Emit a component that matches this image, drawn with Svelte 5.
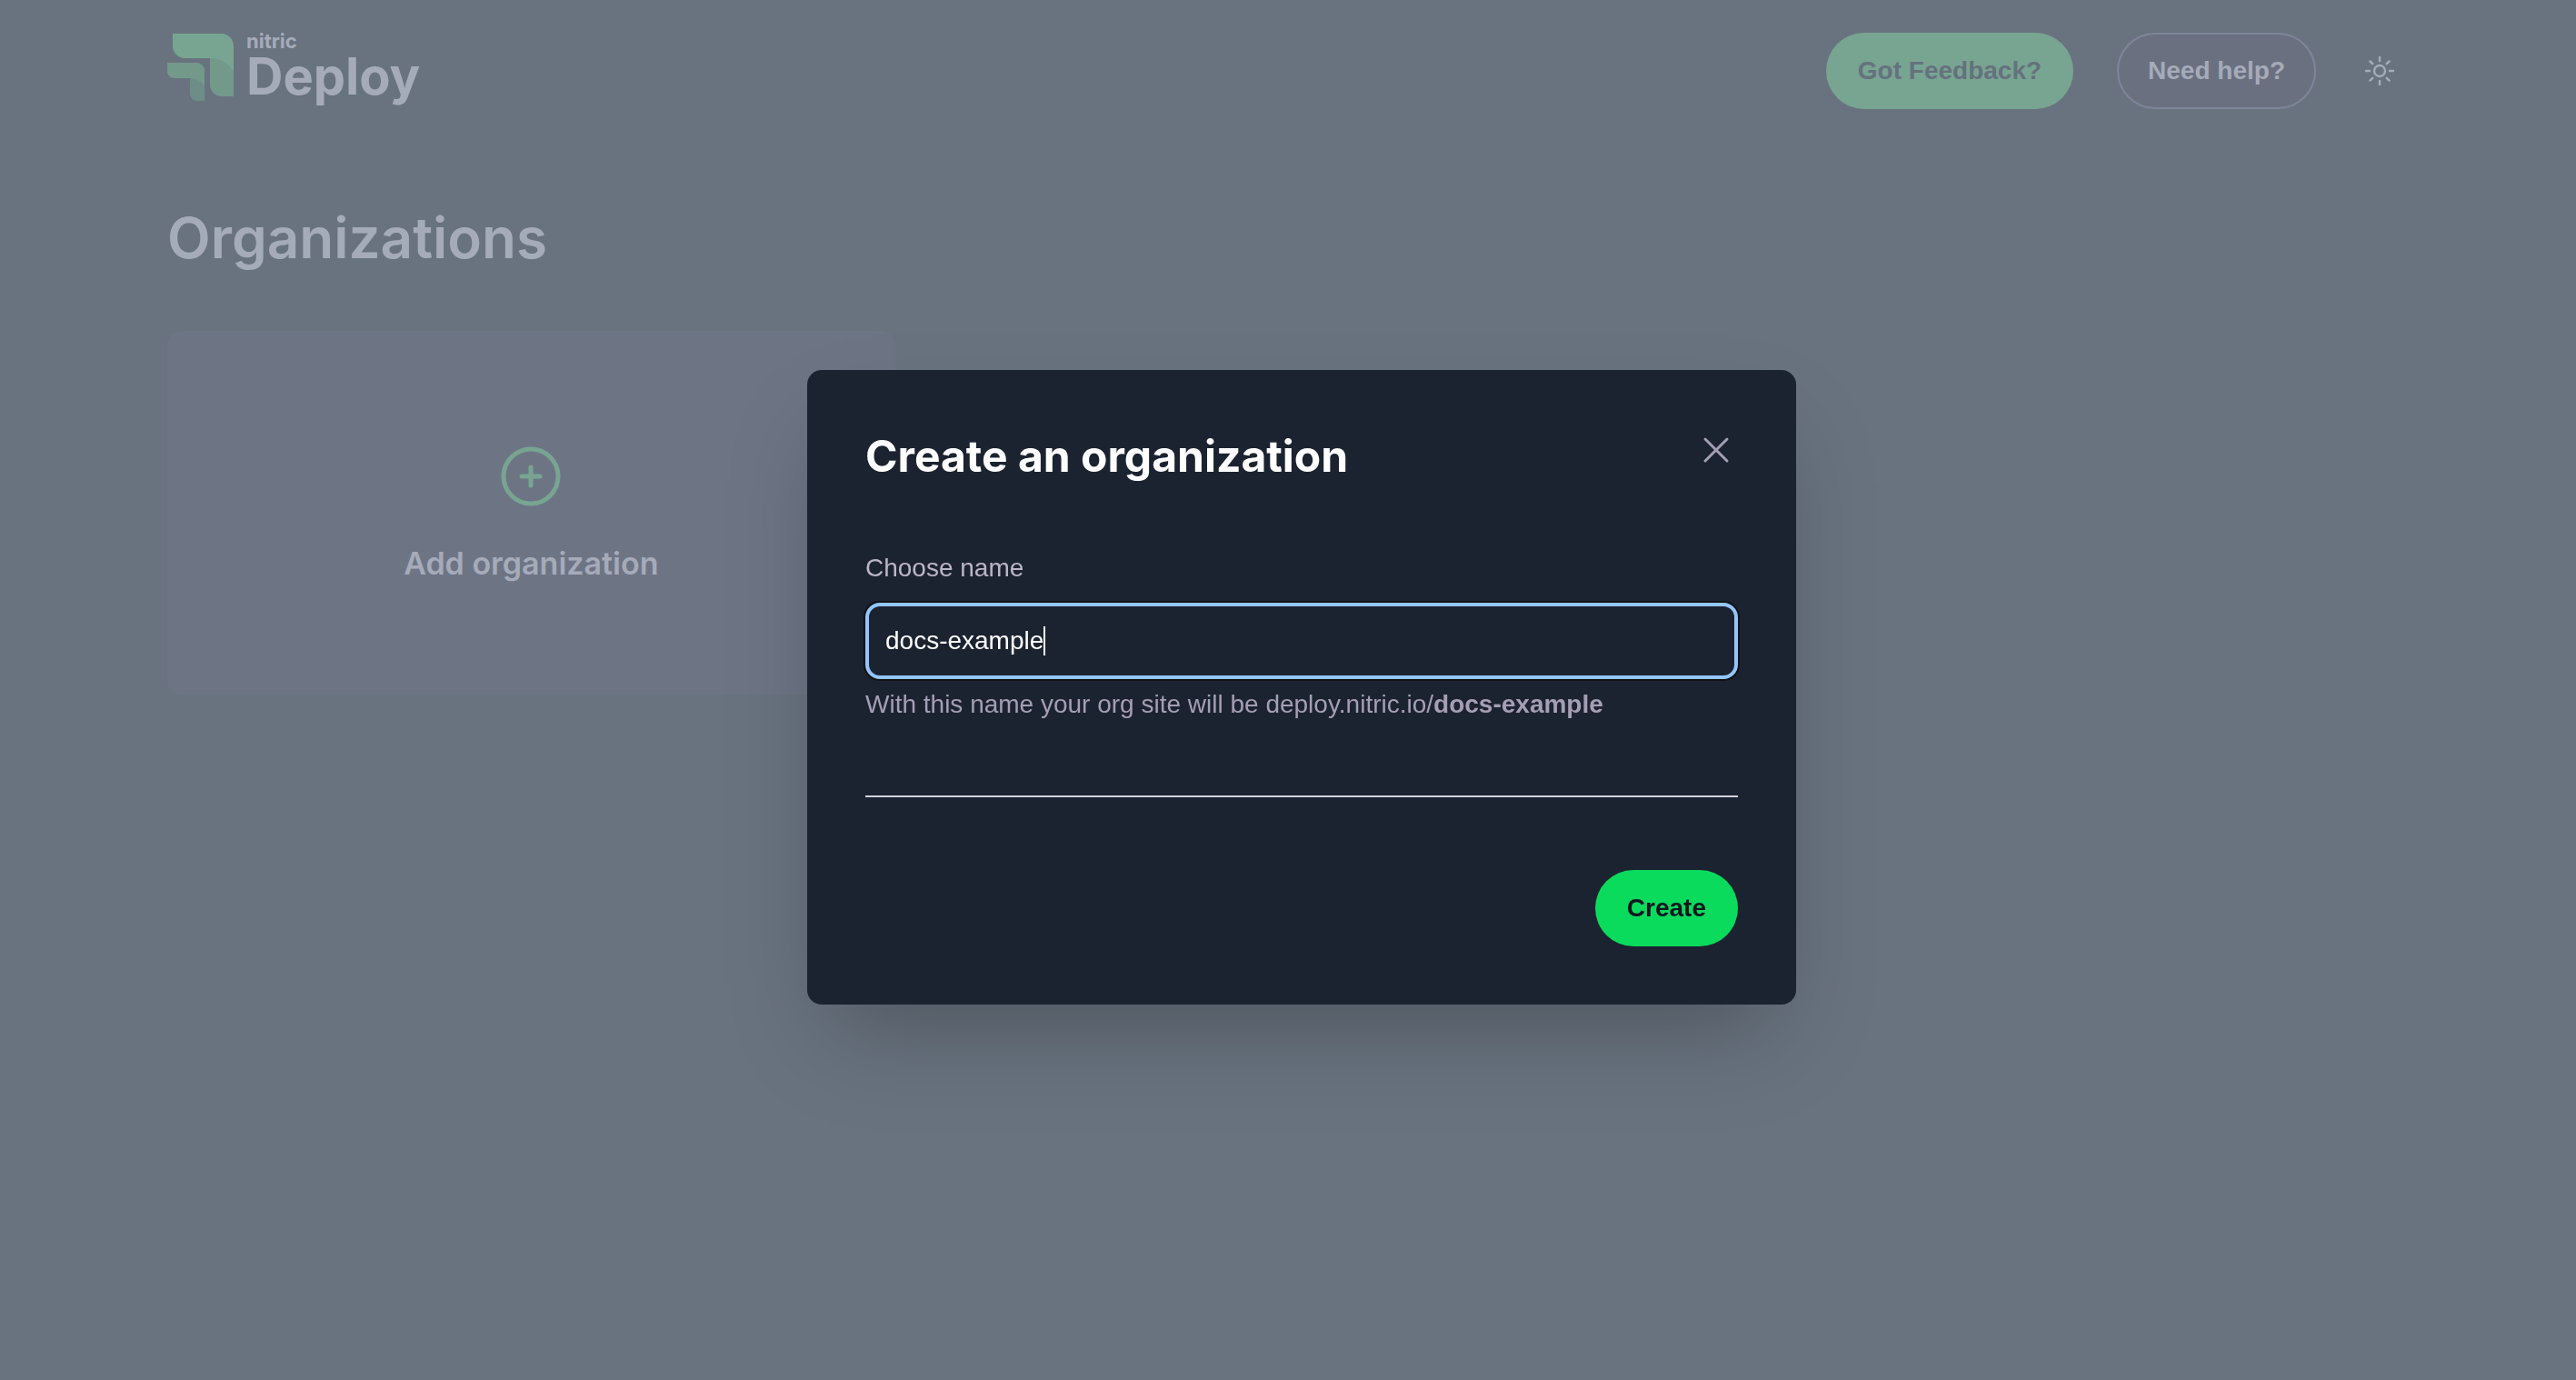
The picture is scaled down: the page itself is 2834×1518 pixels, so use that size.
<script>
  let name = $state('docs-example');
</script>

<div class="page">
  <header>
    <a class="logo" href="/" aria-label="nitric Deploy">
      <svg class="mark" viewBox="0 0 73 74" aria-hidden="true">
        <path d="M6 0H59A14 14 0 0 1 73 14V69H60A13 13 0 0 1 47 56V27H20A14 14 0 0 1 6 13Z" fill="#72998a" />
        <path d="M6 0H59A14 14 0 0 1 73 14V42C68 33 59 27 47 27H20A14 14 0 0 1 6 13Z" fill="#77a591" />
        <path d="M0 32H32A9 9 0 0 1 41 41V74H33A8 8 0 0 1 25 66V49H8A8 8 0 0 1 0 41Z" fill="#6e8d86" />
        <path d="M0 32H32A9 9 0 0 1 41 41V58C38 53 33 49 25 49H8A8 8 0 0 1 0 41Z" fill="#72998a" />
      </svg>
      <span class="wordmark">
        <span class="brand">nitric</span>
        <span class="product">Deploy</span>
      </span>
    </a>
    <nav>
      <button class="pill muted-green" type="button">Got Feedback?</button>
      <button class="pill outline" type="button">Need help?</button>
      <button class="theme" type="button" aria-label="Toggle theme">
        <svg viewBox="0 0 32 32" aria-hidden="true">
          <circle cx="16" cy="16" r="6" />
          <path d="M16 1v4M16 27v4M1 16h4M27 16h4M5.4 5.4l2.8 2.8M23.8 23.8l2.8 2.8M5.4 26.6l2.8-2.8M23.8 8.2l2.8-2.8" />
        </svg>
      </button>
    </nav>
  </header>

  <main>
    <h1>Organizations</h1>
    <div class="grid">
      <button class="card" type="button">
        <svg viewBox="0 0 24 24" aria-hidden="true">
          <path d="M12 9v6m3-3H9m12 0a9 9 0 1 1-18 0 9 9 0 0 1 18 0z" />
        </svg>
        <span>Add organization</span>
      </button>
    </div>
  </main>
</div>

<div class="overlay">
  <div class="dialog" role="dialog" aria-modal="true" aria-labelledby="dialog-title">
    <div class="dialog-head">
      <h2 id="dialog-title">Create an organization</h2>
      <button class="close" type="button" aria-label="Close">
        <svg viewBox="0 0 24 24" aria-hidden="true"><path d="M6 18L18 6M6 6l12 12" /></svg>
      </button>
    </div>
    <form onsubmit={(e) => e.preventDefault()}>
      <label for="org-name">Choose name</label>
      <div class="field">
        <input id="org-name" type="text" bind:value={name} autocomplete="off" spellcheck="false" />
        <span class="caret"></span>
      </div>
      <p>With this name your org site will be deploy.nitric.io/<strong>{name}</strong></p>
      <hr />
      <div class="actions">
        <button class="pill primary" type="submit">Create</button>
      </div>
    </form>
  </div>
</div>

<style>
  :global(body) {
    background: #69737f;
    font-family: 'Liberation Sans', Arial, sans-serif;
    font-size: 28px;
    line-height: 40px;
  }

  button,
  input {
    font: inherit;
    color: inherit;
    margin: 0;
    padding: 0;
    border: 0;
    background: none;
  }

  button {
    cursor: pointer;
  }

  svg {
    display: block;
  }

  .page {
    min-height: 100vh;
    box-sizing: border-box;
    padding: 36px 184px;
    color: #a5abb9;
  }

  header,
  nav,
  .logo {
    display: flex;
  }

  header {
    justify-content: space-between;
    align-items: flex-start;
    height: 84px;
  }

  .logo {
    gap: 14px;
    color: inherit;
    text-decoration: none;
    font-family: Inter, sans-serif;
    font-weight: 700;
  }

  .mark {
    width: 73px;
    height: 74px;
    padding-top: 1px;
  }

  .wordmark {
    display: flex;
    flex-direction: column;
  }

  .brand {
    font-size: 22px;
    line-height: 18px;
  }

  .product {
    font-size: 56px;
    line-height: 60px;
  }

  nav {
    align-items: center;
    gap: 48px;
  }

  .pill {
    box-sizing: border-box;
    height: 84px;
    padding: 0 35px;
    border-radius: 42px;
    font-weight: 700;
  }

  .muted-green {
    background: #77a591;
    color: #66717e;
  }

  .outline {
    background: #6b7080;
    border: 2px solid #7f859a;
    padding: 0 32px;
  }

  .theme {
    width: 64px;
    height: 64px;
    display: grid;
    place-items: center;
    margin-left: -10px;
  }

  .theme svg {
    width: 32px;
    height: 32px;
    fill: none;
    stroke: currentColor;
    stroke-width: 2.4;
    stroke-linecap: round;
  }

  h1 {
    margin: 102px 0 62px;
    font-family: Inter, sans-serif;
    font-size: 62px;
    line-height: 80px;
    font-weight: 600;
  }

  .grid {
    display: grid;
    grid-template-columns: repeat(3, 1fr);
    gap: 32px;
  }

  .card {
    box-sizing: border-box;
    display: flex;
    flex-direction: column;
    align-items: center;
    justify-content: center;
    gap: 36px;
    height: 400px;
    padding-bottom: 4px;
    border-radius: 16px;
    background: #6d7585;
    font-family: Inter, sans-serif;
    font-size: 34px;
    font-weight: 600;
  }

  .card svg {
    width: 80px;
    height: 80px;
    fill: none;
    stroke: #77a591;
    stroke-width: 1.5;
    stroke-linecap: round;
  }

  .overlay {
    position: fixed;
    inset: 0;
    display: flex;
    align-items: center;
    justify-content: center;
    padding: 0 0 6px 30px;
  }

  .dialog {
    box-sizing: border-box;
    width: 1088px;
    max-width: 100%;
    padding: 64px;
    border-radius: 16px;
    background: #1c2330;
    color: #a59eb5;
    box-shadow: 0 50px 100px -24px rgba(0, 0, 0, 0.25);
  }

  .dialog-head {
    display: flex;
    justify-content: space-between;
    align-items: flex-start;
    margin-bottom: 68px;
  }

  h2 {
    margin: 0;
    font-family: Inter, sans-serif;
    font-size: 48px;
    line-height: 62px;
    font-weight: 700;
    color: #fff;
  }

  .close svg {
    width: 48px;
    height: 48px;
    fill: none;
    stroke: #a59eb5;
    stroke-width: 1.5;
    stroke-linecap: round;
  }

  label {
    display: block;
    margin-bottom: 14px;
    line-height: 48px;
    color: #bcb5c8;
  }

  .field {
    box-sizing: border-box;
    display: flex;
    align-items: center;
    height: 84px;
    padding: 0 18px;
    border: 4px solid #93c5fd;
    border-radius: 16px;
    box-shadow: 0 0 0 2px #111214;
    color: #fff;
  }

  input {
    field-sizing: content;
    outline: none;
  }

  .caret {
    width: 2px;
    height: 32px;
    background: #fff;
  }

  p {
    margin: 8px 0 80px;
  }

  hr {
    margin: 0 0 80px;
    border: 0;
    border-top: 2px solid #d1d1dc;
  }

  .actions {
    display: flex;
    justify-content: flex-end;
  }

  .primary {
    background: #0adb5c;
    color: #0e1620;
  }
</style>
